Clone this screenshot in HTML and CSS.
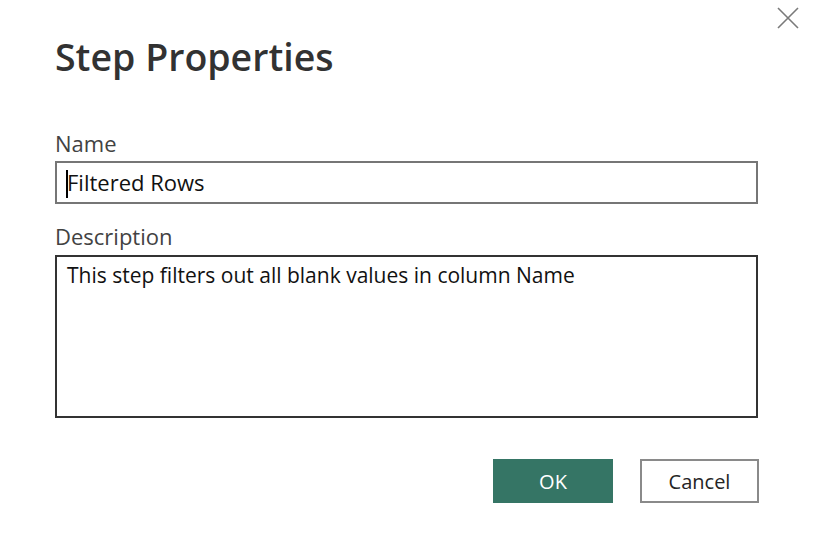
FILE: index.html
```html
<!DOCTYPE html>
<html>
<head>
<meta charset="utf-8">
<link rel="stylesheet" href="styles.css">
</head>
<body>
<div class="dialog">
  <button class="close" aria-label="Close">
    <svg width="22" height="22" viewBox="0 0 22 22"><path d="M1 1 L21 21 M21 1 L1 21" stroke="#7a7a7a" stroke-width="1.6" fill="none"/></svg>
  </button>
  <h1 class="title">Step Properties</h1>
  <label class="label">Name</label>
  <div class="input"><span class="caret"></span>Filtered Rows</div>
  <label class="label label-desc">Description</label>
  <div class="textarea">This step filters out all blank values in column Name</div>
  <div class="actions">
    <button class="btn btn-primary">OK</button>
    <button class="btn btn-secondary">Cancel</button>
  </div>
</div>
</body>
</html>
```
FILE: styles.css
```css
html, body {
  margin: 0;
  padding: 0;
  background: #ffffff;
}
body {
  width: 816px;
  height: 558px;
  overflow: hidden;
  font-family: "Open Sans", "Noto Sans", "Liberation Sans", sans-serif;
}
.dialog {
  position: relative;
  padding: 31px 58px 0 55px;
}
.close {
  position: absolute;
  top: 7px;
  right: 17px;
  border: 0;
  background: none;
  padding: 0;
  width: 22px;
  height: 22px;
}
.close svg { display: block; }
.title {
  margin: 0;
  font-size: 37.5px;
  font-weight: 600;
  color: #323232;
  line-height: 52px;
}
.label {
  display: block;
  margin-top: 46px;
  font-size: 22px;
  line-height: 28px;
  color: #424242;
}
.label-desc { margin-top: 18px; }
.input {
  position: relative;
  margin-top: 4px;
  height: 39px;
  border: 2px solid #767676;
  padding: 0 10px;
  font-size: 22px;
  line-height: 39px;
  color: #111;
}
.caret {
  position: absolute;
  left: 9px;
  top: 7px;
  width: 2px;
  height: 28px;
  background: #000;
}
.textarea {
  margin-top: 5px;
  height: 163px;
  border: 2px solid #333333;
  padding: 4px 10px;
  box-sizing: border-box;
  font-size: 21px;
  line-height: 28px;
  color: #111;
}
.actions {
  display: flex;
  justify-content: flex-end;
  gap: 27px;
  margin-top: 41px;
  margin-right: -1px;
}
.btn {
  width: 120px;
  height: 44px;
  font-family: inherit;
  font-size: 20px;
  padding: 0;
}
.btn-primary {
  background: #357565;
  color: #ffffff;
  border: 0;
}
.btn-secondary {
  width: 119px;
  background: #ffffff;
  color: #252525;
  border: 2px solid #8a8a8a;
}
```
